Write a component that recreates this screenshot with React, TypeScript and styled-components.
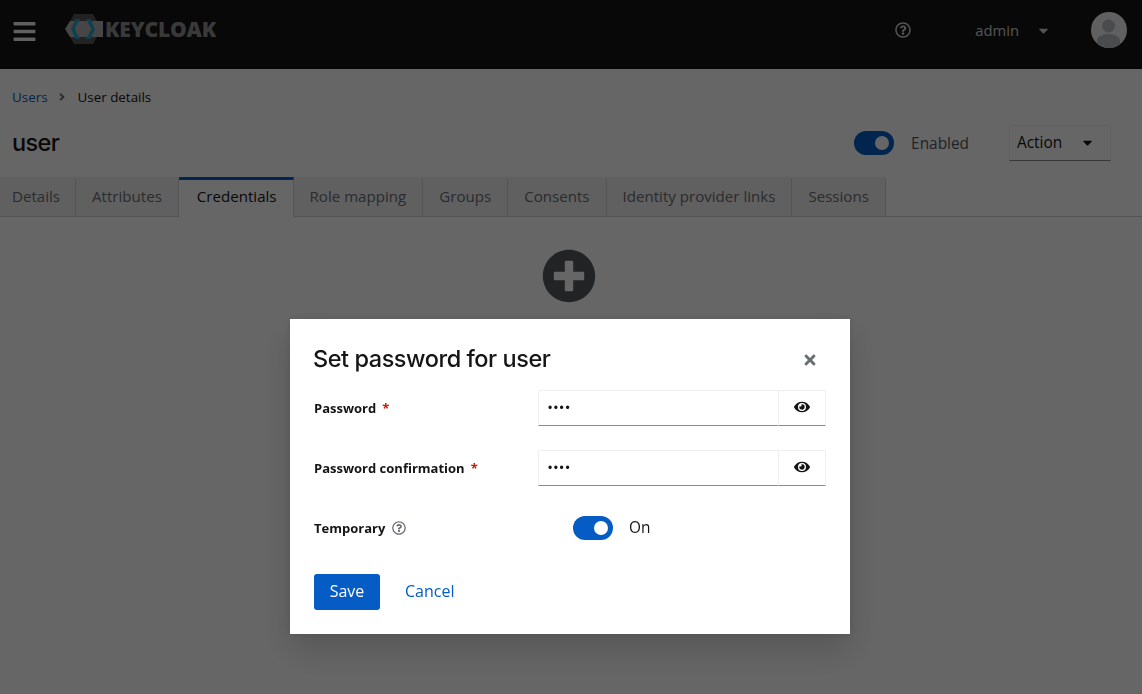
import React from "react";
import styled, { createGlobalStyle } from "styled-components";
import { FaBars, FaCaretDown, FaEye, FaPlusCircle, FaRegQuestionCircle, FaTimes, FaAngleRight } from "react-icons/fa";

const blue = "#045cc4";
const bodyFont = `"Open Sans", "Liberation Sans", sans-serif`;
const headingFont = `Inter, "Liberation Sans", sans-serif`;

const TABS = ["Details", "Attributes", "Credentials", "Role mapping", "Groups", "Consents", "Identity provider links", "Sessions"];

const GlobalStyle = createGlobalStyle`
  html, body { margin: 0; padding: 0; height: 100%; background: #fff; }
  body { font-family: ${bodyFont}; color: #151515; overflow: hidden; }
  * { box-sizing: border-box; }
`;

const Header = styled.header`
  height: 69px;
  background: #151515;
  display: flex;
  align-items: center;
  padding: 0 15px 9px 12px;
`;

const Burger = styled.div`
  color: #f0f0f0;
  font-size: 25px;
  display: flex;
  width: 53px;
  margin-top: 2px;
`;

const LogoWrap = styled.div`
  display: flex;
  align-items: center;
  margin-bottom: 2px;
`;

const LogoText = styled.span`
  font-weight: 800;
  font-size: 21px;
  letter-spacing: -0.15px;
  color: #909090;
  margin-left: 2px;
`;

const HeaderRight = styled.div`
  margin-left: auto;
  display: flex;
  align-items: center;
  color: #d2d2d2;
`;

const HelpButton = styled.div`
  display: flex;
  font-size: 16px;
  margin-right: 64px;
`;

const UserName = styled.span`
  font-size: 14.8px;
  margin-right: 17px;
`;

const HeaderCaret = styled.div`
  display: flex;
  font-size: 15px;
  margin-right: 40px;
`;

const Avatar = styled.svg`
  width: 36px;
  height: 36px;
`;

const Crumbs = styled.nav`
  display: flex;
  align-items: center;
  height: 56px;
  padding: 0 12px;
  font-size: 13.4px;
`;

const CrumbLink = styled.a`
  color: ${blue};
`;

const CrumbSep = styled.span`
  display: flex;
  color: #6a6e73;
  font-size: 12px;
  margin: 0 10px 0 8px;
`;

const TitleRow = styled.div`
  display: flex;
  align-items: flex-start;
  height: 52px;
  padding: 0 31px 0 12px;
`;

const Title = styled.h1`
  margin: 0;
  font-family: ${headingFont};
  font-size: 23.5px;
  line-height: 36px;
  letter-spacing: -0.6px;
  font-weight: 500;
  color: #151515;
`;

const Track = styled.div`
  width: 40px;
  height: 24px;
  border-radius: 12px;
  background: ${blue};
  display: flex;
  align-items: center;
  justify-content: flex-end;
  padding-right: 5px;
  flex-shrink: 0;
`;

const Knob = styled.span`
  width: 14px;
  height: 14px;
  border-radius: 50%;
  background: #fff;
`;

const EnabledGroup = styled.div`
  margin-left: auto;
  display: flex;
  align-items: center;
  height: 36px;
  margin-right: 40px;
`;

const EnabledLabel = styled.span`
  margin-left: 17px;
  font-size: 15.4px;
  color: #55585c;
`;

const ActionButton = styled.div`
  width: 102px;
  height: 36px;
  border: 1px solid #f0f0f0;
  border-bottom-color: #8a8d90;
  display: flex;
  align-items: center;
  justify-content: space-between;
  padding: 0 15px 2px 7px;
  font-size: 15.4px;
  color: #151515;
`;

const CaretBox = styled.span`
  display: flex;
  font-size: 15px;
`;

const TabBar = styled.div`
  display: flex;
  height: 40px;
  border-bottom: 1px solid #d2d2d2;
`;

const Tab = styled.div<{ $active?: boolean }>`
  height: 40px;
  display: flex;
  align-items: center;
  padding: 0 16px 4px ${(p) => (p.$active ? "18px" : "16px")};
  font-size: 15.1px;
  background: ${(p) => (p.$active ? "#fff" : "#f0f0f0")};
  color: ${(p) => (p.$active ? "#151515" : "#6a6e73")};
  border-right: 1px solid #d2d2d2;
  border-top: 3px solid ${(p) => (p.$active ? blue : "transparent")};
  border-bottom: 1px solid ${(p) => (p.$active ? "#fff" : "#d2d2d2")};
  &:first-child { padding-left: 12px; padding-right: 15px; }
`;

const EmptyState = styled.div`
  display: flex;
  justify-content: center;
  padding: 32px 4px 0 0;
  color: #55585c;
  font-size: 54px;
`;

const Backdrop = styled.div`
  position: fixed;
  inset: 0;
  background: rgba(0, 0, 0, 0.6);
  display: flex;
  align-items: flex-start;
  justify-content: center;
  padding: 319px 2px 0 0;
`;

const Modal = styled.div`
  width: 560px;
  background: #fff;
  padding: 24px;
  box-shadow: 0 16px 32px rgba(3, 3, 3, 0.16), 0 0 8px rgba(3, 3, 3, 0.1);
`;

const ModalHead = styled.div`
  display: flex;
  align-items: center;
  justify-content: space-between;
  height: 31px;
  margin-bottom: 16px;
`;

const ModalTitle = styled.h2`
  margin: 0 0 0 -1px;
  font-family: ${headingFont};
  font-size: 23.5px;
  letter-spacing: -0.45px;
  font-weight: 500;
  color: #151515;
`;

const CloseButton = styled.div`
  display: flex;
  color: #6a6e73;
  font-size: 16px;
  margin: 2px 8px 0 0;
`;

const Form = styled.form`
  display: grid;
  grid-template-columns: 224px 1fr;
  row-gap: 24px;
  margin-bottom: 28px;
  align-items: center;
`;

const Label = styled.label`
  font-size: 13px;
  font-weight: 700;
  color: #151515;
  display: flex;
  align-items: center;
`;

const Required = styled.span`
  color: #c9190b;
  margin-left: 6px;
`;

const InputGroup = styled.div`
  display: flex;
  height: 36px;
`;

const PasswordInput = styled.input`
  flex: 1;
  min-width: 0;
  height: 36px;
  border: 1px solid #f0f0f0;
  border-bottom-color: #8a8d90;
  border-right: 0;
  padding: 0 9px;
  font-size: 12px;
  letter-spacing: 1.6px;
  color: #151515;
  outline: none;
`;

const EyeButton = styled.div`
  width: 48px;
  border: 1px solid #f0f0f0;
  border-bottom-color: #8a8d90;
  display: flex;
  align-items: center;
  justify-content: center;
  font-size: 16px;
  padding-bottom: 2px;
`;

const LabelHelp = styled.span`
  display: flex;
  color: #6a6e73;
  font-size: 14px;
  margin-left: 7px;
`;

const SwitchRow = styled.div`
  display: flex;
  align-items: center;
  height: 36px;
  padding-left: 35px;
`;

const SwitchLabel = styled.span`
  margin: 0 0 1px 16px;
  font-size: 15.4px;
`;

const Actions = styled.div`
  display: flex;
  align-items: center;
`;

const SaveButton = styled.button`
  width: 66px;
  height: 36px;
  border: 0;
  border-radius: 3px;
  background: ${blue};
  color: #fff;
  font-family: inherit;
  font-size: 16px;
  padding: 0 0 2px;
`;

const CancelButton = styled.button`
  border: 0;
  background: none;
  color: ${blue};
  font-family: inherit;
  font-size: 16px;
  margin-left: 25px;
  padding: 0 0 2px;
`;

const Switch = () => (
  <Track>
    <Knob />
  </Track>
);

const Logo = () => (
  <svg width="38" height="32" viewBox="0 0 38 32">
    <path d="M9 1h19l8 15-8 15H9L1 16z" fill="#555" />
    <path d="M0 16l5-8h33v16H5z" fill="#b0b0b0" />
    <path d="M15 6L9.500 16 15 26h-4.500L6 16l4.500-10z" fill="#2a9fc9" />
    <path d="M21 6l5.500 10L21 26h4.500L30 16 25.500 6z" fill="#2a9fc9" />
  </svg>
);

const PasswordField = () => (
  <InputGroup>
    <PasswordInput type="password" value="test" readOnly />
    <EyeButton>
      <FaEye />
    </EyeButton>
  </InputGroup>
);

export default function App() {
  return (
    <>
      <GlobalStyle />
      <Header>
        <Burger>
          <FaBars />
        </Burger>
        <LogoWrap>
          <Logo />
          <LogoText>KEYCLOAK</LogoText>
        </LogoWrap>
        <HeaderRight>
          <HelpButton>
            <FaRegQuestionCircle />
          </HelpButton>
          <UserName>admin</UserName>
          <HeaderCaret>
            <FaCaretDown />
          </HeaderCaret>
          <Avatar viewBox="0 0 36 36">
            <circle cx="18" cy="18" r="18" fill="#f0f0f0" />
            <clipPath id="avatar-clip">
              <circle cx="18" cy="18" r="18" />
            </clipPath>
            <g clipPath="url(#avatar-clip)" fill="#b8bbbe">
              <circle cx="17.500" cy="14" r="6.500" />
              <path d="M6 36V29c0-4 4-7 11.500-7S29 25 29 29v7z" />
            </g>
          </Avatar>
        </HeaderRight>
      </Header>
      <Crumbs>
        <CrumbLink>Users</CrumbLink>
        <CrumbSep>
          <FaAngleRight />
        </CrumbSep>
        <span>User details</span>
      </Crumbs>
      <TitleRow>
        <Title>user</Title>
        <EnabledGroup>
          <Switch />
          <EnabledLabel>Enabled</EnabledLabel>
        </EnabledGroup>
        <ActionButton>
          Action
          <CaretBox>
            <FaCaretDown />
          </CaretBox>
        </ActionButton>
      </TitleRow>
      <TabBar>
        {TABS.map((t) => (
          <Tab key={t} $active={t === "Credentials"}>
            {t}
          </Tab>
        ))}
      </TabBar>
      <EmptyState>
        <FaPlusCircle />
      </EmptyState>
      <Backdrop>
        <Modal>
          <ModalHead>
            <ModalTitle>Set password for user</ModalTitle>
            <CloseButton>
              <FaTimes />
            </CloseButton>
          </ModalHead>
          <Form>
            <Label>
              Password<Required>*</Required>
            </Label>
            <PasswordField />
            <Label>
              Password confirmation<Required>*</Required>
            </Label>
            <PasswordField />
            <Label>
              Temporary
              <LabelHelp>
                <FaRegQuestionCircle />
              </LabelHelp>
            </Label>
            <SwitchRow>
              <Switch />
              <SwitchLabel>On</SwitchLabel>
            </SwitchRow>
          </Form>
          <Actions>
            <SaveButton type="button">Save</SaveButton>
            <CancelButton type="button">Cancel</CancelButton>
          </Actions>
        </Modal>
      </Backdrop>
    </>
  );
}
